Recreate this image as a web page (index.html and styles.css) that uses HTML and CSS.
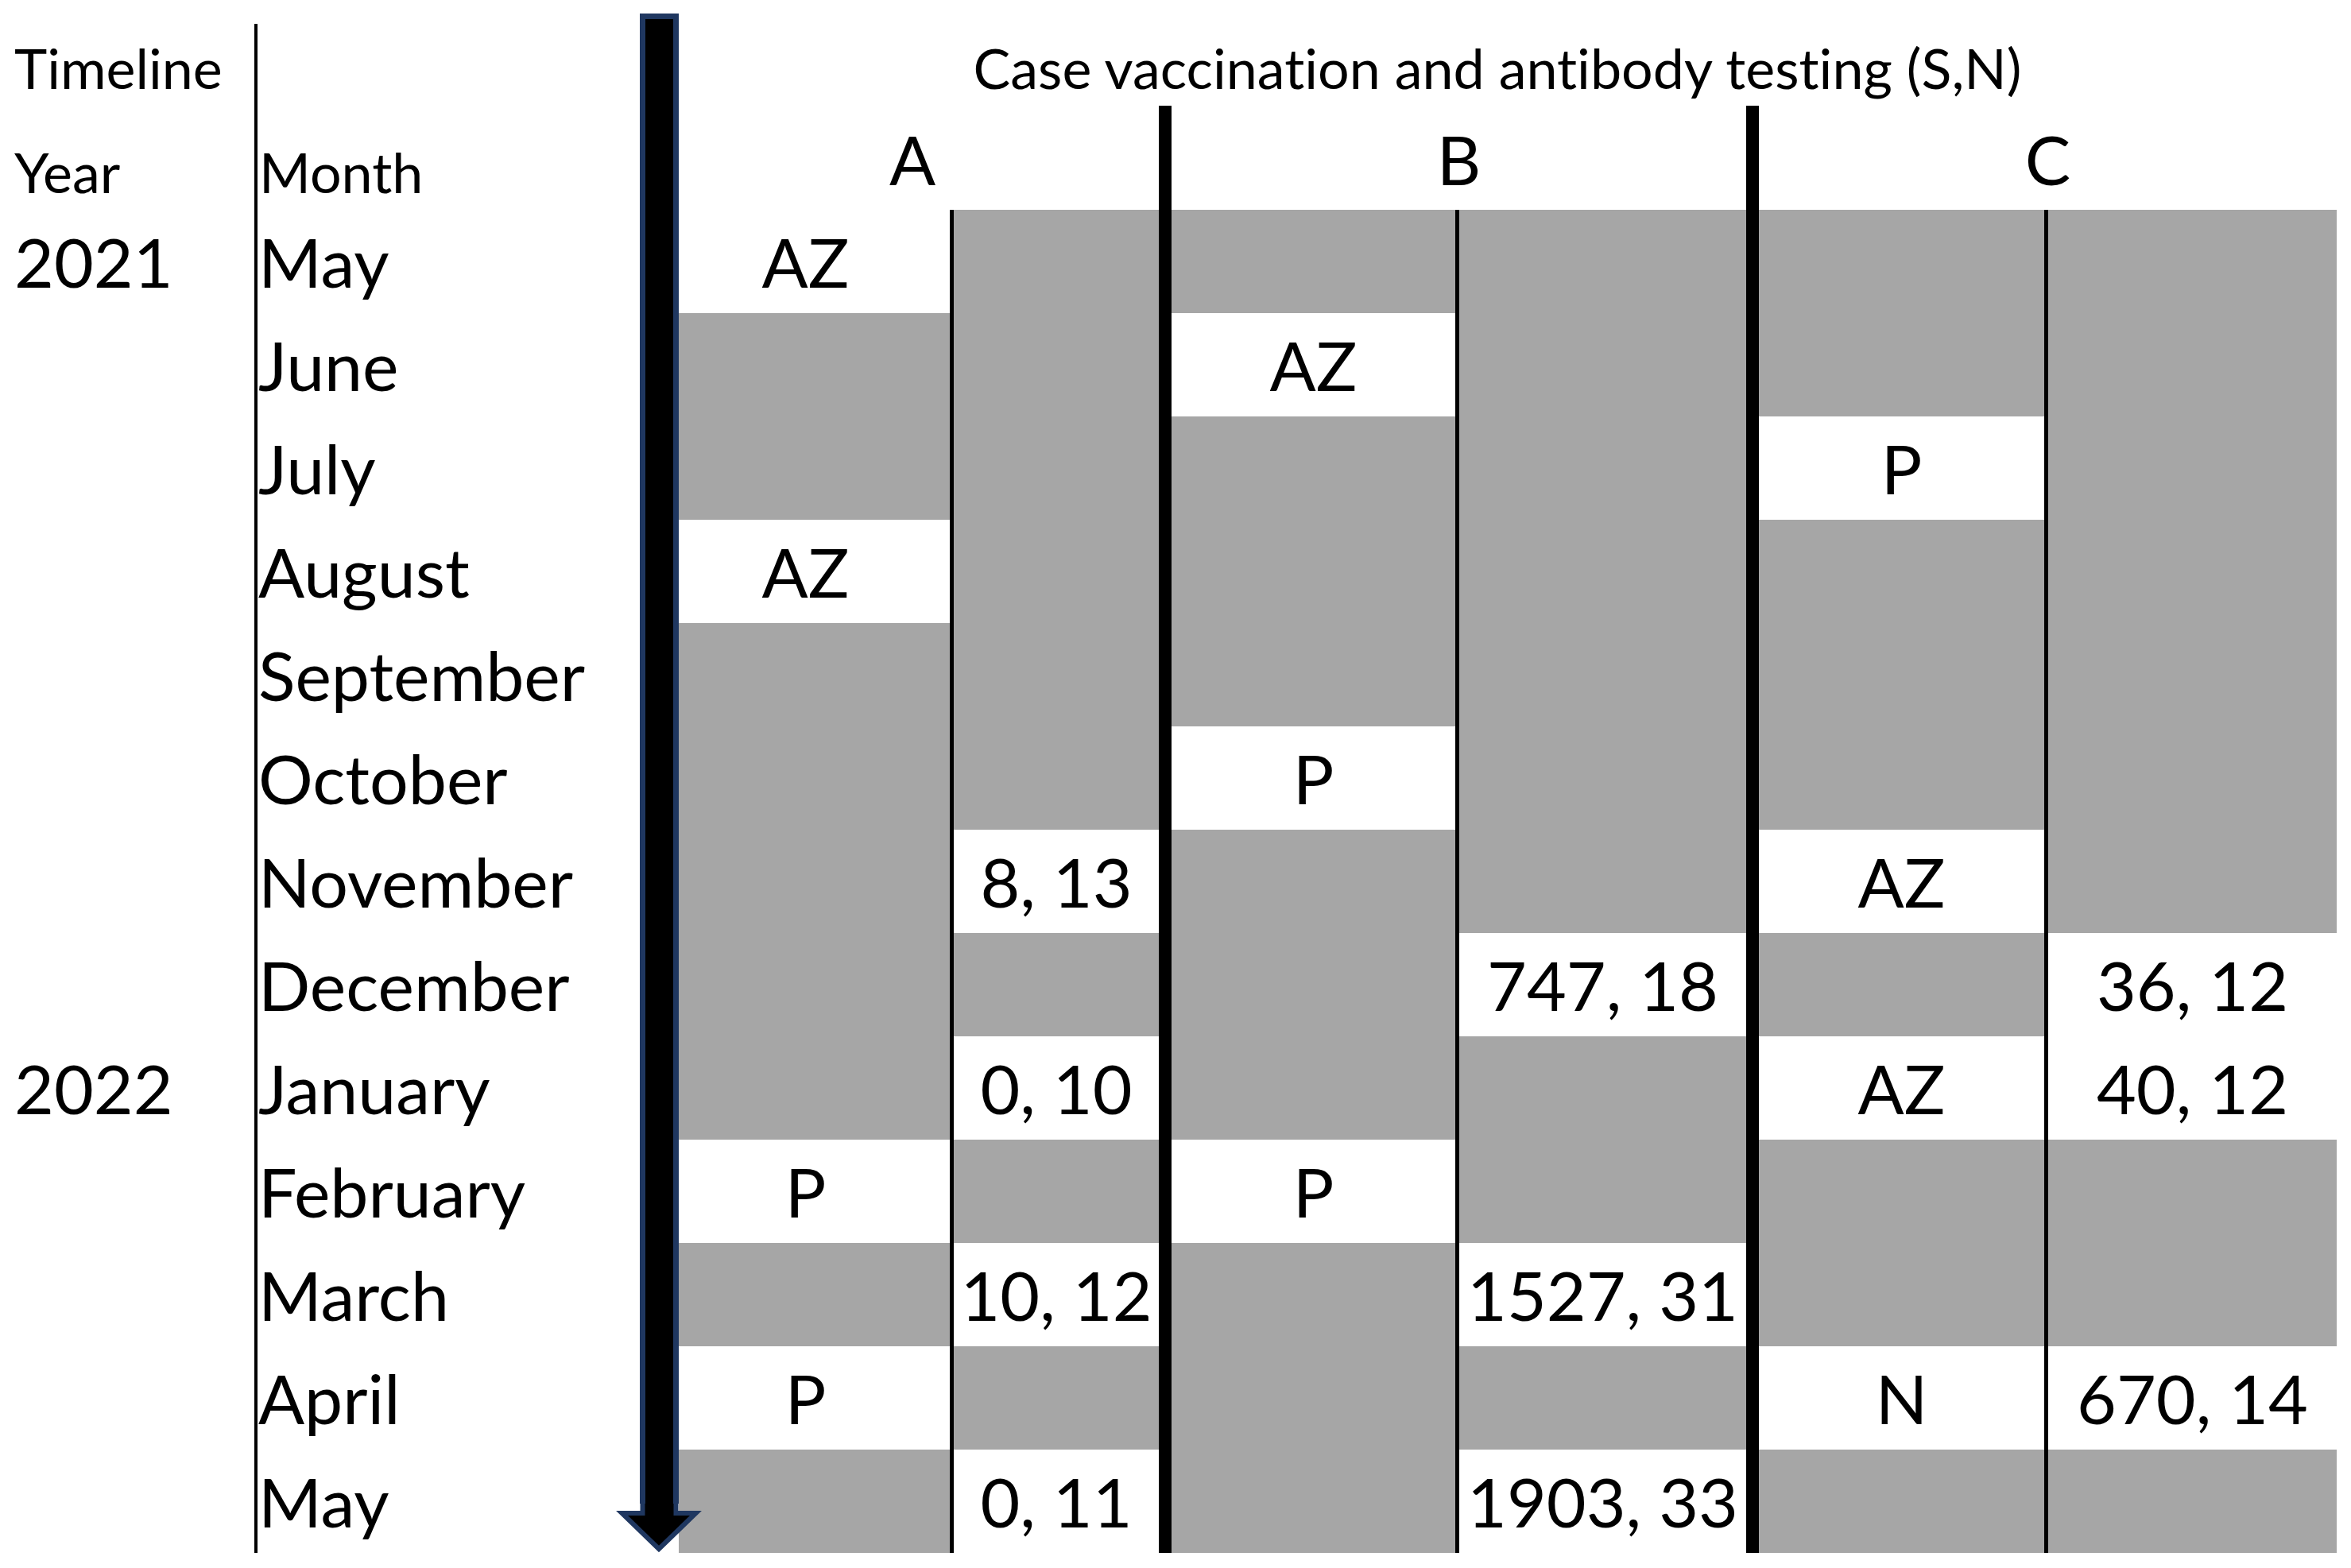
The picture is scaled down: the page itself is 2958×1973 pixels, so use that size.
FILE: index.html
```html
<!DOCTYPE html>
<html lang="en">
<head>
<meta charset="utf-8">
<title>Case vaccination and antibody testing timeline</title>
<link rel="stylesheet" href="styles.css">
</head>
<body>
<div class="chart">
  <div class="timeline">Timeline</div>
  <div class="title">Case vaccination and antibody testing (S,N)</div>
  <div class="hyear">Year</div>
  <div class="hmonth">Month</div>
  <div class="hcase ha">A</div>
  <div class="hcase hb">B</div>
  <div class="hcase hc">C</div>

  <div class="ymline"></div>
  <div class="thick t1"></div>
  <div class="thick t2"></div>
  <div class="thin n1"></div>
  <div class="thin n2"></div>
  <div class="thin n3"></div>

  <div class="row r1"><div class="yr">2021</div><div class="mo">May</div><div class="c av">AZ</div><div class="c g"></div><div class="c g"></div><div class="c g"></div><div class="c g"></div><div class="c g"></div></div>
  <div class="row r2"><div class="yr"></div><div class="mo">June</div><div class="c av g"></div><div class="c g"></div><div class="c">AZ</div><div class="c g"></div><div class="c g"></div><div class="c g"></div></div>
  <div class="row r3"><div class="yr"></div><div class="mo">July</div><div class="c av g"></div><div class="c g"></div><div class="c g"></div><div class="c g"></div><div class="c">P</div><div class="c g"></div></div>
  <div class="row r4"><div class="yr"></div><div class="mo">August</div><div class="c av">AZ</div><div class="c g"></div><div class="c g"></div><div class="c g"></div><div class="c g"></div><div class="c g"></div></div>
  <div class="row r5"><div class="yr"></div><div class="mo">September</div><div class="c av g"></div><div class="c g"></div><div class="c g"></div><div class="c g"></div><div class="c g"></div><div class="c g"></div></div>
  <div class="row r6"><div class="yr"></div><div class="mo">October</div><div class="c av g"></div><div class="c g"></div><div class="c">P</div><div class="c g"></div><div class="c g"></div><div class="c g"></div></div>
  <div class="row r7"><div class="yr"></div><div class="mo">November</div><div class="c av g"></div><div class="c">8, 13</div><div class="c g"></div><div class="c g"></div><div class="c">AZ</div><div class="c g"></div></div>
  <div class="row r8"><div class="yr"></div><div class="mo">December</div><div class="c av g"></div><div class="c g"></div><div class="c g"></div><div class="c">747, 18</div><div class="c g"></div><div class="c">36, 12</div></div>
  <div class="row r9"><div class="yr">2022</div><div class="mo">January</div><div class="c av g"></div><div class="c">0, 10</div><div class="c g"></div><div class="c g"></div><div class="c">AZ</div><div class="c">40, 12</div></div>
  <div class="row r10"><div class="yr"></div><div class="mo">February</div><div class="c av">P</div><div class="c g"></div><div class="c">P</div><div class="c g"></div><div class="c g"></div><div class="c g"></div></div>
  <div class="row r11"><div class="yr"></div><div class="mo">March</div><div class="c av g"></div><div class="c">10, 12</div><div class="c g"></div><div class="c">1527, 31</div><div class="c g"></div><div class="c g"></div></div>
  <div class="row r12"><div class="yr"></div><div class="mo">April</div><div class="c av">P</div><div class="c g"></div><div class="c g"></div><div class="c g"></div><div class="c">N</div><div class="c">670, 14</div></div>
  <div class="row r13"><div class="yr"></div><div class="mo">May</div><div class="c av g"></div><div class="c">0, 11</div><div class="c g"></div><div class="c">1903, 33</div><div class="c g"></div><div class="c g"></div></div>

  <div class="arrow">
    <div class="shaft"></div>
    <svg class="head" width="100" height="60" viewBox="0 0 100 60" aria-hidden="true">
      <path d="M29.5,0 V12 H3.5 L50,57 L96.5,12 H71.5 V0" fill="#000" stroke="#1f3760" stroke-width="6" stroke-linejoin="miter"/>
    </svg>
  </div>
</div>
</body>
</html>
```

FILE: styles.css
```css
html, body {
  margin: 0;
  padding: 0;
  background: #ffffff;
}

body {
  font-family: Lato, "Noto Sans", "DejaVu Sans", sans-serif;
  font-variant-ligatures: none;
  color: #000000;
}

.chart {
  display: grid;
  grid-template-columns: 320px 4px 481px 49px 341px 5px 258px 16px 357px 5px 361px 16px 359px 5px 363px;
  grid-template-rows: 17px 116px 131px repeat(13, 130px);
  width: 2940px;
}

/* header texts */
.timeline {
  grid-row: 2;
  grid-column: 1;
  font-size: 70px;
  line-height: 1;
  padding: 33px 0 0 18px;
}

.title {
  grid-row: 2;
  grid-column: 5 / -1;
  font-size: 70px;
  line-height: 1;
  padding: 33px 26px 0 0;
  text-align: center;
  white-space: nowrap;
}

.hyear {
  grid-row: 3;
  grid-column: 1;
  font-size: 70px;
  line-height: 1;
  padding: 48px 0 0 18px;
}

.hmonth {
  grid-row: 3;
  grid-column: 3;
  font-size: 70px;
  line-height: 1;
  padding: 48px 0 0 2px;
}

.hcase {
  grid-row: 3;
  font-size: 86px;
  line-height: 1;
  padding-top: 24px;
  text-align: center;
}

.ha { grid-column: 5 / 8; padding-right: 16px; }
.hb { grid-column: 9 / 12; }
.hc { grid-column: 13 / 16; }

/* rules */
.ymline {
  grid-column: 2;
  grid-row: 2 / -1;
  margin-top: 13px;
  background: #000;
}

.thick {
  grid-row: 3 / -1;
  background: #000;
}
.t1 { grid-column: 8; }
.t2 { grid-column: 12; }

.thin {
  grid-row: 4 / -1;
  background: #000;
}
.n1 { grid-column: 6; }
.n2 { grid-column: 10; }
.n3 { grid-column: 14; }

/* data rows */
.row { display: contents; }
.row > * { grid-row: var(--r); }
.r1 { --r: 4; }
.r2 { --r: 5; }
.r3 { --r: 6; }
.r4 { --r: 7; }
.r5 { --r: 8; }
.r6 { --r: 9; }
.r7 { --r: 10; }
.r8 { --r: 11; }
.r9 { --r: 12; }
.r10 { --r: 13; }
.r11 { --r: 14; }
.r12 { --r: 15; }
.r13 { --r: 16; }

.yr,
.mo {
  display: flex;
  align-items: center;
  font-size: 86px;
  line-height: 1;
  white-space: nowrap;
}
.yr { padding-left: 18px; }
.mo { padding-left: 1px; }

.c {
  display: flex;
  align-items: center;
  justify-content: center;
  font-size: 86px;
  line-height: 1;
  white-space: nowrap;
  background: #ffffff;
}
.c.av { padding-right: 22px; }
.c.g { background: #a6a6a6; }

/* timeline arrow */
.arrow {
  grid-column: 4;
  grid-row: 2 / -1;
  display: flex;
  flex-direction: column;
  z-index: 2;
}

.shaft {
  flex: 1;
  background: #000;
  border: 7px solid #1f3760;
  border-bottom: 0;
}

.head {
  display: block;
  flex: none;
  margin-left: -26px;
  margin-bottom: 2px;
  overflow: visible;
}
```
